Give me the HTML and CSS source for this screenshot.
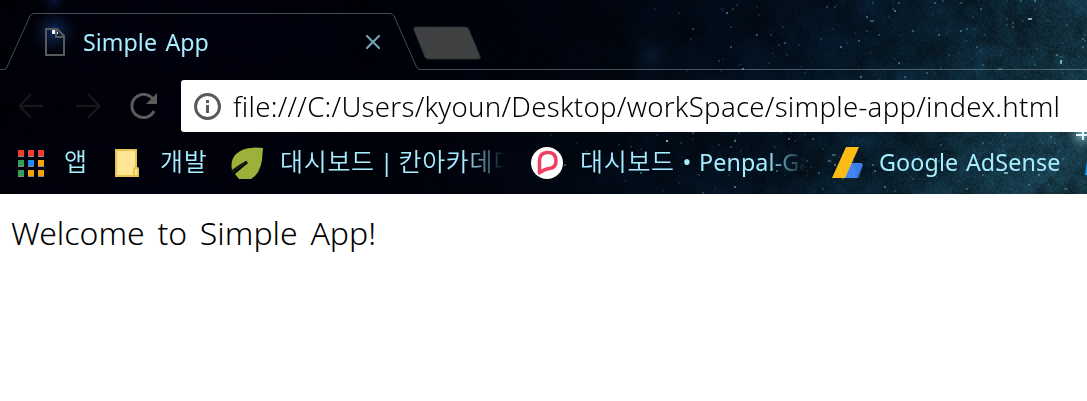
FILE: index.html
```html
<!DOCTYPE html>
<html lang="ko">
<head>
<meta charset="utf-8">
<title>Simple App</title>
<link rel="stylesheet" href="styles.css">
</head>
<body>
<header class="chrome">
  <canvas class="sky" id="sky" width="544" height="97"></canvas>
  <div class="tabstrip">
    <svg class="tab-outline" width="1087" height="80" viewBox="0 0 1087 80">
      <path d="M0 69.5H4Q6 69.5 7 67L30 16Q31.500 13.500 34 13.500H390Q392.500 13.500 394 16L416.500 67Q418 69.500 420 69.500H1087" fill="none" stroke="#9aa4ad" stroke-opacity=".46"/>
      <path d="M416 27H465Q468 27 469 30L480 56Q481 59 478 59H429Q426 59 425 57L414 30Q413 27 416 27Z" fill="#404143" stroke="#2c2e31"/>
    </svg>
    <div class="tab">
      <svg class="page-icon" width="20" height="28" viewBox="0 0 20 28"><path d="M1 1H12L19 8V27H1ZM11 1V9H19" fill="none" stroke="#5a5a5a" stroke-width="2"/></svg>
      <span class="tab-title">Simple App</span>
      <svg class="close" width="14" height="14" viewBox="0 0 14 14"><path d="M1 1L13 13M13 1L1 13" stroke="#75a3b1" stroke-width="2.100" stroke-linecap="round"/></svg>
    </div>
  </div>
  <div class="toolbar">
    <svg class="nav back" width="26" height="26" viewBox="0 0 26 26"><path d="M13 1L1.500 13L13 25M1.500 13H25" fill="none" stroke="#171717" stroke-width="2.300"/></svg>
    <svg class="nav forward" width="26" height="26" viewBox="0 0 26 26"><path d="M13 1L24.500 13L13 25M24.500 13H1" fill="none" stroke="#171717" stroke-width="2.300"/></svg>
    <svg class="nav reload" width="28" height="28" viewBox="0 0 28 28"><path d="M23.400 6.800A11.600 11.600 0 1 0 24 18" fill="none" stroke="#5b5b5b" stroke-width="3"/><path d="M27 0V11H16Z" fill="#5b5b5b"/></svg>
    <div class="omnibox">
      <svg width="27" height="27" viewBox="0 0 27 27"><circle cx="13.500" cy="13.500" r="12" fill="none" stroke="#5a5a5a" stroke-width="3"/><path d="M12 7H15V10H12ZM12 12H15V20H12Z" fill="#5a5a5a"/></svg>
      <span class="url">file:///C:/Users/kyoun/Desktop/workSpace/simple-app/index.html</span>
    </div>
  </div>
  <nav class="bookmarks">
    <a class="bm apps">
      <svg width="27" height="27" viewBox="0 0 27 27">
        <path d="M0 6H6V7H0ZM10 6H16V7H10ZM20 6H26V7H20ZM0 16H6V17H0ZM10 16H16V17H10ZM20 16H26V17H20ZM0 26H6V27H0ZM10 26H16V27H10ZM20 26H26V27H20Z" fill="#8c8888"/>
        <path d="M0 0H6V6H0ZM10 0H16V6H10ZM20 0H26V6H20Z" fill="#f33b30"/><path d="M0 10H6V16H0ZM0 20H6V26H0Z" fill="#30a158"/><path d="M10 10H16V16H10Z" fill="#2489f4"/><path d="M20 10H26V16H20ZM10 20H16V26H10ZM20 20H26V26H20Z" fill="#f3a20b"/>
      </svg>
      <span class="label"><span class="ko">앱</span></span>
    </a>
    <a class="bm folder">
      <svg width="24" height="28" viewBox="0 0 24 28"><path d="M1 1H21V27H1Z" fill="#ffe696" stroke="#e9c34d" stroke-width="2"/><path d="M19 20Q19 19 20 19H22Q23 19 23 20V27H19Z" fill="#ffe696" stroke="#e9c34d" stroke-width="2"/></svg>
      <span class="label"><span class="ko">개발</span></span>
    </a>
    <a class="bm khan">
      <svg width="33" height="33" viewBox="0 0 33 33"><path d="M32 1Q14-1 5 7Q-1 13 1 23L15 14L17 16L4 27L8 32H20Q29 27 31 13Z" fill="#9bb13a"/><path d="M1 25Q8 19 16 15" fill="none" stroke="#15190e" stroke-width="3"/></svg>
      <span class="label fade"><span class="ko">대시보드</span> | <span class="ko">칸아카데미</span></span>
    </a>
    <a class="bm penpal">
      <svg width="32" height="32" viewBox="0 0 32 32"><circle cx="16" cy="16" r="16" fill="#fff"/><path d="M8.500 26V13Q9 6 16 5.500Q25 5 25 14Q25 21 18 21.500Q13.500 22 8.500 26Z" fill="none" stroke="#ef3f63" stroke-width="3.500" stroke-linejoin="round"/></svg>
      <span class="label fade"><span class="ko">대시보드</span> • Penpal-Ga</span>
    </a>
    <a class="bm adsense">
      <svg width="32" height="32" viewBox="0 0 32 32"><path d="M18 16H28Q32 16 30 20L25 31H12Z" fill="#4285f4"/><path d="M21 16L25 31H27L31 18Z" fill="#3975df" opacity=".55"/><path d="M14 0H27L13 31H0Z" fill="#fbbc16"/></svg>
      <span class="label">Google AdSense</span>
    </a>
    <svg class="next" width="2" height="14" viewBox="0 0 2 14"><path d="M2 0V14H0Z" fill="#169bea"/></svg>
  </nav>
</header>
<main class="page">Welcome to Simple App!</main>
<script src="sky.js"></script>
</body>
</html>
```
FILE: styles.css
```css
* { box-sizing: border-box; }
body { margin: 0; width: 1087px; height: 401px; overflow: hidden; background: #fff; font-family: "Noto Sans", "Noto Sans CJK KR", sans-serif; }
svg { display: block; flex: none; }
.chrome { position: relative; height: 194px; overflow: hidden; background: #000108; color: #a6edff; }
.sky { position: absolute; inset: 0; width: 1088px; height: 194px; image-rendering: pixelated; }
.tabstrip, .toolbar, .bookmarks { position: relative; display: flex; }
.tabstrip { height: 70px; }
.tab-outline { position: absolute; left: 0; top: 0; }
.tab { display: flex; align-items: center; width: 381px; height: 56px; margin-top: 14px; padding-left: 45px; }
.tab-title { margin-left: 18px; width: 283px; font-size: 23.2px; letter-spacing: .05px; word-spacing: 2.3px; line-height: 56px; white-space: nowrap; }
.toolbar { height: 62px; padding: 10px 0 0 18px; }
.nav { margin-top: 13px; }
.forward { margin-left: 31px; }
.reload { margin-left: 29px; }
.omnibox { display: flex; align-items: center; width: 940px; height: 52px; flex: none; margin-left: 23px; padding-left: 13px; border-radius: 3px; background: #fff; color: #000; }
.url { margin-left: 12px; font-size: 27.6px; font-weight: 350; letter-spacing: .26px; line-height: 52px; height: 52px; white-space: nowrap; }
.bookmarks { height: 62px; padding-left: 18px; align-items: center; }
.bm { display: flex; align-items: center; flex: none; height: 62px; }
.label { font-size: 23.3px; letter-spacing: .1px; word-spacing: 1.5px; line-height: 61px; height: 62px; white-space: nowrap; overflow: hidden; }
.ko { font-family: "Noto Sans CJK KR", sans-serif; font-size: 25px; font-weight: 350; letter-spacing: .7px; line-height: 1; }
.fade { -webkit-mask-image: linear-gradient(90deg, #000 82%, transparent 100%); mask-image: linear-gradient(90deg, #000 82%, transparent 100%); }
.apps { width: 97px; gap: 19px; }
.folder { width: 116px; gap: 21px; }
.khan { width: 300px; gap: 16px; }
.khan .label { width: 225px; word-spacing: -.8px; }
.penpal { width: 301px; gap: 17px; }
.penpal .label { width: 226px; }
.adsense { width: 253px; gap: 15px; }
.next { margin-top: 10px; }
.page { padding: 15px 0 0 11px; font-size: 32px; font-weight: 350; word-spacing: 4.4px; line-height: 48px; color: #000; white-space: nowrap; }
```
FILE: sky.js
```js
// Night-sky theme: dark navy at the left, teal nebula at the right, scattered stars.
const canvas = document.getElementById('sky');
const ctx = canvas.getContext('2d');
const W = canvas.width, H = canvas.height;
let seed = 77;
const rnd = () => (seed = (seed * 16807) % 2147483647) / 2147483647;
const hash = (x, y) => { const s = Math.sin(x * 127.1 + y * 311.7) * 43758.5453; return s - Math.floor(s); };
function noise(x, y) {
  const i = Math.floor(x), j = Math.floor(y);
  let u = x - i, v = y - j;
  u = u * u * (3 - 2 * u); v = v * v * (3 - 2 * v);
  return (hash(i, j) * (1 - u) + hash(i + 1, j) * u) * (1 - v) + (hash(i, j + 1) * (1 - u) + hash(i + 1, j + 1) * u) * v;
}
const stops = [[0, 0, 1, 9], [90, 0, 1, 12], [210, 0, 2, 10], [280, 1, 5, 15], [350, 2, 12, 25], [410, 4, 21, 37], [470, 11, 37, 53], [544, 24, 62, 78]];
const image = ctx.createImageData(W, H);
for (let y = 0; y < H; y++) for (let x = 0; x < W; x++) {
  let p = x + (y - 35) * 0.5;
  p = Math.max(0, Math.min(543, p));
  let k = 0;
  while (k < stops.length - 2 && stops[k + 1][0] <= p) k++;
  const a = stops[k], b = stops[k + 1], t = (p - a[0]) / (b[0] - a[0]);
  const cloud = noise(x / 18, y / 14) * 0.6 + noise(x / 5, y / 5) * 0.4;
  const f = 0.52 + cloud * 0.8 + (rnd() - 0.5) * 0.25;
  const o = (y * W + x) * 4;
  for (let c = 0; c < 3; c++) image.data[o + c] = (a[c + 1] + (b[c + 1] - a[c + 1]) * t) * f;
  image.data[o + 3] = 255;
}
ctx.putImageData(image, 0, 0);
for (let i = 0; i < 330; i++) {
  const x = Math.floor(265 + Math.pow(rnd(), 0.65) * 279), y = Math.floor(rnd() * H);
  if (x < 325 && y < 55) continue;
  ctx.fillStyle = `rgba(92,155,185,${0.12 + Math.pow(rnd(), 3) * 0.6})`;
  ctx.fillRect(x, y, rnd() > 0.97 ? 2 : 1, 1);
}
function glow(x, y, r, color) {
  const g = ctx.createRadialGradient(x, y, 0, x, y, r);
  g.addColorStop(0, color);
  g.addColorStop(1, 'transparent');
  ctx.fillStyle = g;
  ctx.fillRect(x - r, y - r, r * 2, r * 2);
}
glow(27, 16, 14, 'rgba(24,58,125,.8)');
glow(27, 0, 9, 'rgba(14,32,78,.7)');
glow(326, 28, 16, 'rgba(10,38,68,.55)');
glow(541, 67.5, 11, 'rgba(130,205,218,.8)');
ctx.fillStyle = '#e6f7ff';
[[26, 15, 2, 2], [28, 16, 1, 1], [538, 67, 6, 1], [541, 66, 1, 4]].forEach(r => ctx.fillRect(...r));
ctx.fillStyle = '#77aebb';
[[514, 9, 2, 1], [530, 30, 1, 2], [502, 86, 2, 1], [333, 70, 1, 1]].forEach(r => ctx.fillRect(...r));
```
